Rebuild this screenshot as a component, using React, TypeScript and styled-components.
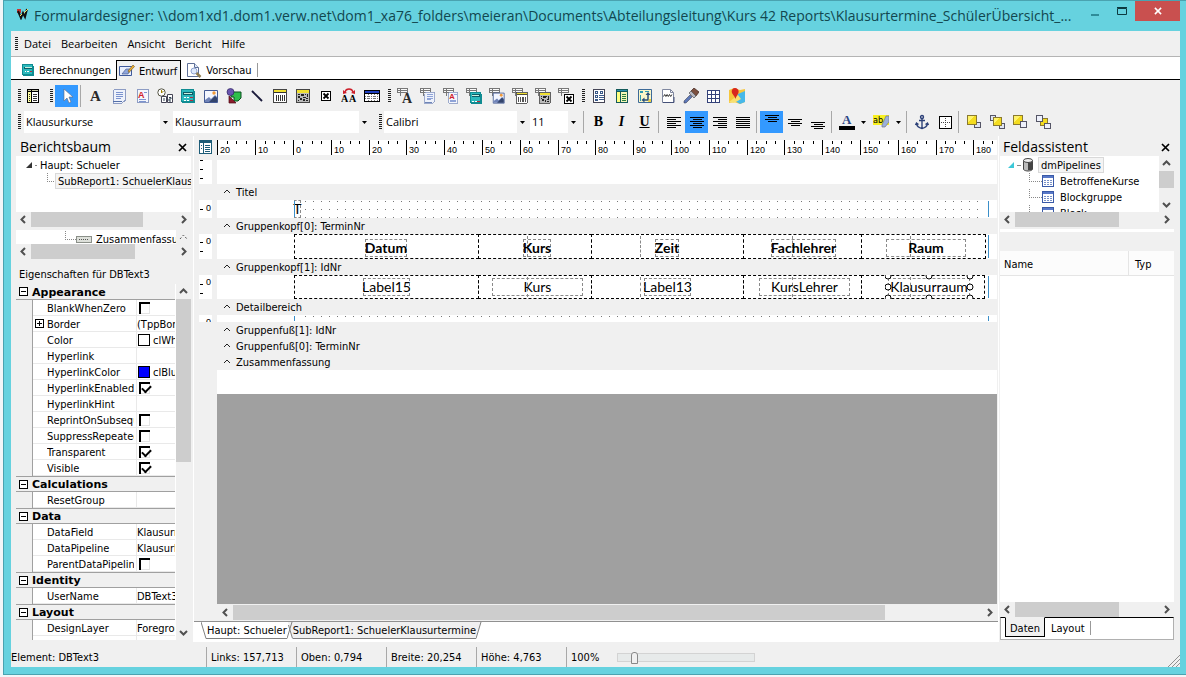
import React from "react";
import styled, { createGlobalStyle, css } from "styled-components";

const UI = '"DejaVu Sans Condensed", "DejaVu Sans", sans-serif';
const SEGOE = '"Open Sans", "Noto Sans", sans-serif';
const FACE = "#f0f0f0";
const CYAN = "#66d2df";

const GlobalStyle = createGlobalStyle`
  * { box-sizing: border-box; }
  body { margin: 0; background: #f2f6f8; font: 11px/16px ${UI}; color: #000; overflow: hidden; }
  button, select, input { font: inherit; color: inherit; margin: 0; padding: 0; border: 0; background: none; border-radius: 0; }
  ul { list-style: none; margin: 0; padding: 0; }
  svg { display: block; flex: none; }
`;

/* ---------- window ---------- */
const Desktop = styled.div`
  height: 100vh;
  display: flex;
  padding: 0 0 2px 3px;
`;
const Window = styled.div`
  flex: 1;
  min-width: 0;
  display: flex;
  flex-direction: column;
  background: ${CYAN};
  border: 1px solid #4aa3b0;
  border-right-width: 0;
  padding: 0 6px 7px 7px;
`;
const TitleBar = styled.header`
  height: 30px;
  flex: none;
  display: flex;
  align-items: flex-start;
`;
const TitleIcon = styled.div`
  padding: 7px 6px 0 5px;
`;
const Title = styled.h1`
  flex: 1;
  min-width: 0;
  margin: 0;
  font: 14px/30px ${SEGOE};
  color: #12474f;
  white-space: nowrap;
  overflow: hidden;
`;
const CaptionButton = styled.button<{ $close?: boolean }>`
  width: ${(p) => (p.$close ? 45 : 27)}px;
  height: 20px;
  display: grid;
  place-items: center;
  background: ${(p) => (p.$close ? "#c9504f" : "transparent")};
`;
const Client = styled.div`
  flex: 1;
  min-height: 0;
  display: flex;
  flex-direction: column;
  background: ${FACE};
`;
const Grip = styled.span<{ $h?: number }>`
  width: 3px;
  height: ${(p) => p.$h ?? 14}px;
  flex: none;
  background: repeating-linear-gradient(#222 0 1px, transparent 1px 2px);
`;
const Text = styled.span`
  padding-top: 2px;
`;
const MenuBar = styled.nav`
  height: 26px;
  flex: none;
  display: flex;
  align-items: center;
  padding-left: 4px;
  border-bottom: 1px solid #b4b4b4;
`;
const MenuItem = styled.button`
  margin-left: 10px;
  font: 11px/16px ${SEGOE};
  & + & { margin-left: 10px; }
  ${Grip} + & { margin-left: 6px; }
`;
const TabRow = styled.div`
  height: 23px;
  flex: none;
  display: flex;
  align-items: flex-end;
  padding-left: 5px;
  background: #fff;
  box-shadow: inset 0 -1px #000;
`;
const ViewTab = styled.button<{ $active?: boolean }>`
  height: 20px;
  display: flex;
  align-items: center;
  gap: 4px;
  padding: 0 5px;
  ${(p) =>
    p.$active &&
    css`
      background: ${FACE};
      border: 1px solid #000;
      border-bottom: 0;
      padding: 0 3px 0 2px;
    `}
`;
const TabEnd = styled.span`
  width: 1px;
  height: 14px;
  margin-bottom: 3px;
  background: #999;
`;

/* ---------- toolbars ---------- */
const Toolbar = styled.div<{ $format?: boolean }>`
  height: ${(p) => (p.$format ? 26 : 30)}px;
  flex: none;
  display: flex;
  align-items: center;
  padding: ${(p) => (p.$format ? "0 0 2px" : "2px 0 0")} 7px;
  padding-left: 7px;
`;
const GripSlot = styled.span<{ $w: number }>`
  width: ${(p) => p.$w}px;
  flex: none;
  display: flex;
  justify-content: flex-end;
  padding-right: 2px;
`;
const ToolButton = styled.button<{ $active?: boolean; $w?: number }>`
  width: ${(p) => p.$w ?? 23}px;
  height: 22px;
  flex: none;
  display: grid;
  place-items: center;
  background: ${(p) => (p.$active ? "#3399ff" : "transparent")};
`;
const Letter = styled.span<{ $italic?: boolean; $under?: boolean }>`
  font: bold 14px/16px "Liberation Serif", serif;
  font-style: ${(p) => (p.$italic ? "italic" : "normal")};
  text-decoration: ${(p) => (p.$under ? "underline" : "none")};
`;
const Sep = styled.span`
  width: 1px;
  height: 22px;
  flex: none;
  margin: 0 3px 0 2px;
  background: #a8a8a8;
`;
const ComboBox = styled.label<{ $w: number }>`
  position: relative;
  width: ${(p) => p.$w}px;
  height: 22px;
  flex: none;
  margin-right: 1px;
  background: linear-gradient(90deg, #fff calc(100% - 12px), ${FACE} 0);
`;
const ComboSelect = styled.select`
  appearance: none;
  width: 100%;
  height: 22px;
  padding-left: 2px;
  font: 11px/20px ${SEGOE};
  outline: 0;
`;
const ComboArrow = styled.svg`
  position: absolute;
  right: 4px;
  top: 10px;
  pointer-events: none;
`;

/* ---------- body ---------- */
const Body = styled.div`
  flex: 1;
  min-height: 0;
  display: flex;
`;
const LeftPanel = styled.aside`
  width: 183px;
  flex: none;
  display: flex;
  flex-direction: column;
  padding: 2px 2px 2px 5px;
  border-right: 1px solid #fff;
`;
const RightPanel = styled.aside`
  width: 182px;
  flex: none;
  display: flex;
  flex-direction: column;
  padding: 2px 6px 2px 1px;
  border-left: 1px solid #fff;
`;
const PanelTitle = styled.h2`
  height: 18px;
  flex: none;
  display: flex;
  justify-content: space-between;
  align-items: center;
  margin: 0;
  padding: 0 4px 0 3px;
  font: 14px/18px ${SEGOE};
  ${LeftPanel} & { padding-left: 4px; }
`;
const IconButton = styled.button`
  display: grid;
  place-items: center;
`;
const TreeBox = styled.div<{ $h: number }>`
  height: ${(p) => p.$h}px;
  flex: none;
  display: flex;
  background: #fff;
  overflow: hidden;
`;
const Tree = styled.ul`
  flex: 1;
  min-width: 0;
  overflow: hidden;
  padding-top: 1px;
`;
const TreeItem = styled.li<{ $indent: number }>`
  height: 16px;
  display: flex;
  align-items: center;
  padding-left: ${(p) => p.$indent}px;
  white-space: nowrap;
`;
const NodeLabel = styled.span<{ $selected?: boolean; $gap?: number }>`
  padding: 2px 2px 0;
  margin-left: ${(p) => p.$gap ?? 1}px;
  ${(p) =>
    p.$selected &&
    css`
      line-height: 12px;
      border: 1px solid #d9d9d9;
      background: #f4f4f4;
    `}
`;
const Branch = styled.span<{ $w: number; $h?: number }>`
  width: ${(p) => p.$w}px;
  height: ${(p) => p.$h ?? 9}px;
  align-self: flex-start;
  flex: none;
  border-bottom: 1px dotted #888;
  border-left: 1px dotted #888;
`;
const SplitGap = styled.div<{ $h: number }>`
  height: ${(p) => p.$h}px;
  flex: none;
`;

const Bar = styled.div<{ $vertical?: boolean }>`
  display: flex;
  flex: none;
  flex-direction: ${(p) => (p.$vertical ? "column" : "row")};
  ${(p) => (p.$vertical ? "width: 15px;" : "height: 15px;")}
  background: ${FACE};
`;
const BarButton = styled.button`
  width: 15px;
  height: 15px;
  flex: none;
  display: grid;
  place-items: center;
`;
const BarTrack = styled.div<{ $vertical?: boolean }>`
  flex: 1;
  min-width: 0;
  min-height: 0;
  display: flex;
  flex-direction: ${(p) => (p.$vertical ? "column" : "row")};
`;
const BarThumb = styled.div`
  background: #cdcdcd;
  flex: none;
`;

const CHEVRON: Record<string, string> = {
  left: "M6 1 2.500 4.500 6 8",
  right: "M3 1 6.500 4.500 3 8",
  up: "M1 6 4.500 2.500 8 6",
  down: "M1 3 4.500 6.500 8 3",
};
const Chevron = ({ dir }: { dir: string }) => (
  <svg width="9" height="9" fill="none" stroke="#505050" strokeWidth="2">
    <path d={CHEVRON[dir]} />
  </svg>
);
const ScrollBar = ({ vertical, size }: { vertical?: boolean; size: number }) => (
  <Bar $vertical={vertical}>
    <BarButton aria-label="back"><Chevron dir={vertical ? "up" : "left"} /></BarButton>
    <BarTrack $vertical={vertical}>
      <BarThumb style={vertical ? { height: `${size}%` } : { width: `${size}%` }} />
    </BarTrack>
    <BarButton aria-label="forward"><Chevron dir={vertical ? "down" : "right"} /></BarButton>
  </Bar>
);
const CloseMark = ({ color = "#000", size = 9 }: { color?: string; size?: number }) => (
  <svg width={size} height={size} viewBox="0 0 9 9" fill="none" stroke={color} strokeWidth="1.7">
    <path d="M1 1 8 8M8 1 1 8" />
  </svg>
);

/* ---------- property inspector ---------- */
const PropCaption = styled.div`
  height: 25px;
  flex: none;
  padding: 8px 0 0 3px;
  line-height: 16px;
`;
const PropArea = styled.div`
  flex: 1;
  min-height: 0;
  display: flex;
  overflow: hidden;
`;
const PropClip = styled.div`
  flex: 1;
  min-width: 0;
  overflow: hidden;
  border-right: 1px solid #fff;
`;
const PropTable = styled.table`
  width: 100%;
  table-layout: fixed;
  border-collapse: separate;
  border-spacing: 0;
`;
const GroupCell = styled.th`
  height: 16px;
  padding: 0 0 0 3px;
  text-align: left;
  border-bottom: 1px solid #a0a0a0;
  tr:not(:first-child) > & { border-top: 1px solid #a0a0a0; }
`;
const GroupInner = styled.span`
  height: 14px;
  display: flex;
  align-items: center;
  gap: 4px;
  font: bold 11px/14px "DejaVu Sans", sans-serif;
`;
const Gutter = styled.td`
  width: 17px;
  padding: 0;
  border-right: 1px solid #a0a0a0;
`;
const NameCell = styled.td<{ $expand?: boolean }>`
  width: 104px;
  height: 16px;
  padding: 0 2px 0 ${(p) => (p.$expand ? 2 : 14)}px;
  background: #fff;
  white-space: nowrap;
  overflow: hidden;
  border-bottom: 1px solid #e9e9e9;
  border-right: 1px solid #e9e9e9;
`;
const ValueCell = styled.td`
  height: 16px;
  padding: 0;
  background: #fff;
  white-space: nowrap;
  overflow: hidden;
  border-bottom: 1px solid #e9e9e9;
`;
const CellLine = styled.span`
  height: 15px;
  display: flex;
  align-items: center;
  gap: 3px;
  overflow: hidden;
  line-height: 15px;
`;
const Swatch = styled.span<{ $color: string }>`
  width: 12px;
  height: 12px;
  flex: none;
  margin-left: 1px;
  border: 1px solid #000;
  background: ${(p) => p.$color};
`;
const Tick = styled.input`
  appearance: none;
  display: block;
  width: 11px;
  height: 12px;
  margin-left: 2px;
  border: solid #000;
  border-width: 2px 0 0 2px;
  box-shadow: inset -1px -1px #e4e4e4;
  &:checked::before {
    content: "";
    display: block;
    width: 7px;
    height: 4px;
    margin: 1px 0 0 1px;
    border: solid #000;
    border-width: 0 0 2px 2px;
    transform: rotate(-45deg);
  }
`;
const Expander = ({ plus }: { plus?: boolean }) => (
  <svg width="9" height="9" shapeRendering="crispEdges" fill="#fff" stroke="#000">
    <path d="M.5.500h8v8h-8zM2 4.500h5" />
    {plus && <path d="M4.500 2v5" />}
  </svg>
);

type Prop = { name: string; text?: string; check?: boolean; color?: string; plus?: boolean };
const GROUPS: { title: string; props: Prop[] }[] = [
  {
    title: "Appearance",
    props: [
      { name: "BlankWhenZero", check: false },
      { name: "Border", text: "(TppBorder)", plus: true },
      { name: "Color", color: "#ffffff", text: "clWhite" },
      { name: "Hyperlink" },
      { name: "HyperlinkColor", color: "#0000ff", text: "clBlue" },
      { name: "HyperlinkEnabled", check: true },
      { name: "HyperlinkHint" },
      { name: "ReprintOnSubsequent", check: false },
      { name: "SuppressRepeatedValues", check: false },
      { name: "Transparent", check: true },
      { name: "Visible", check: true },
    ],
  },
  { title: "Calculations", props: [{ name: "ResetGroup" }] },
  {
    title: "Data",
    props: [
      { name: "DataField", text: "Klausurraum" },
      { name: "DataPipeline", text: "Klausurkurse" },
      { name: "ParentDataPipeline", check: false },
    ],
  },
  { title: "Identity", props: [{ name: "UserName", text: "DBText3" }] },
  { title: "Layout", props: [{ name: "DesignLayer", text: "Foreground" }, { name: "Height", text: "4,763" }] },
];

/* ---------- design surface ---------- */
const Center = styled.main`
  flex: 1;
  min-width: 0;
  display: flex;
  flex-direction: column;
`;
const Surface = styled.div`
  flex: 1;
  min-height: 0;
  display: flex;
  flex-direction: column;
  padding: 4px 0 0 5px;
`;
const Strip = styled.div<{ $h: number }>`
  height: ${(p) => p.$h}px;
  flex: none;
  display: flex;
  gap: 5px;
  overflow: hidden;
`;
const SideRuler = styled.div<{ $blank?: boolean }>`
  width: 13px;
  flex: none;
  background: ${(p) => (p.$blank ? FACE : "#fff")};
`;
const Paper = styled.div<{ $h?: number }>`
  position: relative;
  flex: 1;
  min-width: 0;
  ${(p) => p.$h && `height: ${p.$h}px;`}
  margin-right: 1px;
  background: #fff;
  overflow: hidden;
`;
const BandLabel = styled.div`
  height: 16px;
  flex: none;
  display: flex;
  align-items: center;
  gap: 5px;
  padding-left: 24px;
  white-space: nowrap;
`;
const Dots = styled.div`
  position: absolute;
  left: 81px;
  right: 12px;
  top: 0;
  bottom: 0;
  background: linear-gradient(90deg, #fff 7px, transparent 7px), linear-gradient(#fff 1px, #777 1px 2px, #fff 2px);
  background-size: 8px 8px;
`;
const Margin = styled.div<{ $x: number }>`
  position: absolute;
  left: ${(p) => p.$x}px;
  top: 1px;
  bottom: 1px;
  width: 1px;
  background: #3b8fc9;
`;
const Guide = styled.div<{ $x: number }>`
  position: absolute;
  left: ${(p) => p.$x}px;
  top: 2px;
  bottom: 2px;
  border-left: 1px dashed #888;
`;
const Box = styled.div<{ $x: number; $w: number }>`
  position: absolute;
  left: ${(p) => p.$x}px;
  top: 0;
  width: ${(p) => p.$w}px;
  bottom: 0;
  border: 1px dashed #000;
`;
const Field = styled.div<{ $x: number; $w: number; $y: number; $bold?: boolean }>`
  position: absolute;
  left: ${(p) => p.$x}px;
  top: ${(p) => p.$y}px;
  width: ${(p) => p.$w}px;
  height: 18px;
  display: flex;
  justify-content: center;
  border: 1px dashed #8a8a8a;
  font: ${(p) => (p.$bold ? "bold" : "normal")} 14px/16px Lato, sans-serif;
  white-space: nowrap;
`;
const Handles = styled.svg`
  position: absolute;
  left: 668px;
  top: 0;
`;
const Void = styled.div`
  flex: 1;
  min-height: 0;
  margin: 0 1px 0 18px;
  background: #a0a0a0;
`;
const ScrollWrap = styled.div`
  margin: 1px 1px 1px 19px;
`;
const PageTabs = styled.div`
  height: 21px;
  flex: none;
  display: flex;
  align-items: flex-start;
  padding-left: 7px;
  background: #fff;
  border-top: 1px solid #909090;
`;
const PageTab = styled.button<{ $active?: boolean }>`
  height: 17px;
  padding-top: 2px;
  background: ${(p) => (p.$active ? FACE : "#fff")};
  border-bottom: 1px solid #808080;
  line-height: 14px;
  white-space: nowrap;
`;
const Slant = ({ kind }: { kind: "first" | "mid" | "last" }) => (
  <svg width="6" height="17" fill="none" stroke="#808080">
    {kind === "first" && <path d="M0 0 5 16.500H6" />}
    {kind === "mid" && (
      <>
        <path d="M1 0H6V16H5z" fill={FACE} stroke="none" />
        <path d="M0 16.500 5 0M1.500 3 5.500 16.500" />
      </>
    )}
    {kind === "last" && (
      <>
        <path d="M0 0H5L0 16z" fill={FACE} stroke="none" />
        <path d="M0 16.500 5 0" />
      </>
    )}
  </svg>
);

/* ---------- right panel ---------- */
const WhiteGap = styled.div`
  height: 3px;
  flex: none;
  margin: 2px 0 0;
  background: #fff;
`;
const ListHead = styled.table`
  width: 100%;
  table-layout: fixed;
  border-spacing: 0;
  background: #fff;
  th {
    height: 25px;
    padding: 4px 5px 0 4px;
    text-align: left;
    font-weight: normal;
    border-bottom: 1px solid #e5e5e5;
    background: #fcfcfc;
  }
  th + th { width: 46px; border-left: 1px solid #e5e5e5; padding-left: 6px; }
`;
const ListBody = styled.div`
  flex: 1;
  background: #fff;
`;
const DockTabs = styled.div`
  height: 23px;
  flex: none;
  display: flex;
  align-items: flex-start;
  padding-left: 4px;
  background: #fff;
  border: 1px solid #b0b0b0;
  border-top: 1px solid #000;
`;
const DockTab = styled.button<{ $active?: boolean }>`
  height: 20px;
  padding: 2px 5px 0 6px;
  ${(p) =>
    p.$active &&
    css`
      margin-top: -1px;
      padding: 3px 4px 0;
      background: ${FACE};
      border: 1px solid #000;
      border-top-color: ${FACE};
    `}
`;
const DockEnd = styled.span`
  width: 1px;
  height: 14px;
  margin-top: 3px;
  background: #999;
`;

/* ---------- status bar ---------- */
const StatusBar = styled.footer`
  height: 25px;
  flex: none;
  display: flex;
  padding-top: 5px;
`;
const StatusCell = styled.div<{ $w: number }>`
  width: ${(p) => p.$w}px;
  height: 20px;
  flex: none;
  line-height: 22px;
  white-space: nowrap;
  & + & { border-left: 1px solid #a8a8a8; padding-left: 4px; }
`;
const Zoom = styled.input`
  appearance: none;
  width: 138px;
  height: 9px;
  margin-top: 6px;
  background: #e7eaea;
  border: 1px solid #d3d3d3;
  &::-webkit-slider-thumb {
    appearance: none;
    width: 7px;
    height: 12px;
    background: #f0f0f0;
    border: 1px solid #888;
    border-radius: 3px 3px 0 0;
  }
`;
const SizeGrip = styled.svg`
  margin: auto 0 0 auto;
`;

/* ---------- icons ---------- */
const Px = ({ children, size = 16 }: { children: React.ReactNode; size?: number }) => (
  <svg width={size} height={size} viewBox="0 0 16 16" shapeRendering="crispEdges">{children}</svg>
);
const glyphs: Record<string, React.ReactNode> = {
  list: (
    <>
      <path d="M2 1h12v14H2z" fill="#000" />
      <path d="M3 4h3v10H3z" fill="#ffffa0" />
      <path d="M7 4h6v10H7z" fill="#fff" />
      <path d="M3 2h3v1H3zM7 2h6v1H7z" fill="#c8c8a0" />
      <path d="M8 6h4M8 8h4M8 10h4M8 12h4M4 6h1M4 8h1M4 10h1M4 12h1" stroke="#333" transform="translate(0 .5)" />
    </>
  ),
  pointer: (
    <path d="M5 1v12l3-3 2 5 2-1-2-5h4z" fill="#fff" stroke="#667" strokeWidth=".6" shapeRendering="auto" />
  ),
  memo: (
    <>
      <path d="M4 1.500h10v11l-3 2.500H2V3z" fill="#eef2fb" stroke="#8d9cc4" />
      <path d="M5 4.500h7M5 6.500h7M5 8.500h7M5 10.500h5" stroke="#7b93cf" />
      <path d="M2 13.500h9" stroke="#5570a8" />
    </>
  ),
  rich: (
    <>
      <path d="M4 1.500h10v13H3V3z" fill="#f4f6fc" stroke="#8d9cc4" />
      <path d="M5 11.500h7M5 13h7M10 4h3" stroke="#7b93cf" />
      <text x="4" y="10" fontFamily="Liberation Sans" fontWeight="bold" fontSize="9" fill="#d0202a">A</text>
    </>
  ),
  sysvar: (
    <g shapeRendering="auto">
      <circle cx="4.500" cy="4.500" r="3.700" fill="#fff" stroke="#554" />
      <path d="M4.500 2v3l2-2" stroke="#a08000" fill="none" />
      <path d="M4.500 8.500h5v6h-5zM10.500 6.500h5v8h-5z" fill="#fff" stroke="#445" />
      <path d="M7 10v3M12 9.500h2v1.500h-2v2h2" stroke="#345" fill="none" />
    </g>
  ),
  calc: (
    <>
      <path d="M1 1h13v2h1v12H2v-1H1z" fill="#108c92" />
      <path d="M2 2h11v11H2z" fill="#2cb9bd" />
      <path d="M3 4h10v3H3z" fill="#0c5c66" />
      <path d="M4 5h8v1H4z" fill="#c8f0e0" />
      <path d="M4 9h2v1H4zM7 9h2v1H7zM4 12h2v1H4zM7 12h2v1H7z" fill="#fff" />
      <path d="M10 9h3v1h-3zM10 12h3v1h-3z" fill="#b03040" />
    </>
  ),
  image: (
    <g shapeRendering="auto">
      <path d="M1.500 2.500h13v12h-13z" fill="#f3f6ff" stroke="#445a94" />
      <path d="M2 14V12L6 9l2 2 4-4 2 2v5z" fill="#6f83b8" />
      <path d="M6 14 12 8l2 2v4z" fill="#33446c" />
      <circle cx="11" cy="5" r="1.700" fill="#f09a3a" />
    </g>
  ),
  shape: (
    <g shapeRendering="auto">
      <path d="M5 4h10v6l-3 3H8V9H5z" fill="#2fbe4a" stroke="#0b4f20" />
      <circle cx="4.500" cy="4" r="3.500" fill="#6a55b0" stroke="#2e2460" strokeWidth=".7" />
      <path d="M3 8v7h7z" fill="#8c1c2c" stroke="#4a0a14" strokeWidth=".7" />
    </g>
  ),
  line: <path d="M3 3 13 13" stroke="#1a1a3a" strokeWidth="1.900" shapeRendering="auto" />,
  barcode: (
    <>
      <path d="M1.500 1.500h13v13h-13z" fill="#fff" stroke="#444" />
      <path d="M2 2h12v3H2z" fill="#f0e030" />
      <path d="M2 4.500h12M4.500 7v6M6.500 7v6M8.500 7v6M10.500 7v6M12.500 7v6" stroke="#333" />
    </>
  ),
  barcode2d: (
    <>
      <path d="M1.500 1.500h13v13h-13z" fill="#fff" stroke="#444" />
      <path d="M2 2h12v3H2z" fill="#f0e030" />
      <path d="M2 5h12v9H2z" fill="#bbb" />
      <path d="M3 6h2v1H3zM6 6h3v2H6zM10 6h1v1h-1zM12 6h1v3h-1zM3 8h2v2H3zM8 9h3v1H8zM5 10h2v2H5zM3 12h1v1H3zM8 11h2v2H8zM11 10h2v1h-2zM11 12h2v1h-2z" fill="#222" />
    </>
  ),
  check: (
    <>
      <path d="M3.500 3.500h9v9h-9z" fill="#fff" stroke="#000" />
      <path d="M5.500 5.500 10.500 10.500M10.500 5.500 5.500 10.500" stroke="#000" strokeWidth="1.800" shapeRendering="auto" />
    </>
  ),
  rotate: (
    <g shapeRendering="auto">
      <path d="M4 4C5 0 11 0 12 4" fill="none" stroke="#cc1f2a" strokeWidth="1.300" />
      <path d="M2 2v4l4-1zM14 2v4l-4-1z" fill="#cc1f2a" />
      <text x="0" y="14" fontFamily="Liberation Serif" fontWeight="bold" fontSize="10">A</text>
      <text x="8" y="14" fontFamily="Liberation Serif" fontWeight="bold" fontSize="10">A</text>
    </g>
  ),
  table: (
    <>
      <path d="M0 2h16v12H0z" fill="#000" />
      <path d="M1 3h14v2H1z" fill="#2040c0" />
      <path d="M1 6h14v7H1z" fill="#fff" />
      <path d="M1 8.500h14M1 10.500h14M4.500 6v7M7.500 6v7M10.500 6v7M13 6v7" stroke="#777" strokeDasharray="1 1" />
    </>
  ),
  letterA: <text x="2" y="13" fontFamily="Liberation Serif" fontWeight="bold" fontSize="15" fill="#2a2a2a">A</text>,
  tree: (
    <>
      <path d="M2.500 1.500h11v13h-11z" fill="#fff" stroke="#445" />
      <path d="M4.500 3.500h2v2h-2zM4.500 7.500h2v2h-2zM4.500 11.500h2v1h-2zM9.500 3.500h2v2h-2z" fill="#fff" stroke="#3a5a8a" />
      <path d="M8 7.500h5M8 9.500h5M8 11.500h5" stroke="#3a5a8a" />
    </>
  ),
  data: (
    <>
      <path d="M2 1h12v14H2z" fill="#145a5a" />
      <path d="M3 4h3v10H3z" fill="#ffff80" />
      <path d="M7 4h6v10H7z" fill="#f6f6b8" />
      <path d="M3 2h10v1H3z" fill="#2c90b0" />
      <path d="M8 6.500h4M8 8.500h4M8 10.500h4M8 12.500h4" stroke="#2c8040" />
    </>
  ),
  layout: (
    <g shapeRendering="auto">
      <path d="M1.500 1.500h13v13h-13z" fill="#fbf7c8" stroke="#3d6a98" />
      <path d="M3 3h3v2H3zM3 7h1v6H3zM8 3h4v1H8z" fill="#2f9ab0" />
      <path d="M6 12h5V6" fill="none" stroke="#2a4f7a" strokeWidth="1.500" />
      <path d="M8.500 7l2.500-3 2.500 3zM7.500 9.500v5L4.500 12z" fill="#2a4f7a" />
      <path d="M12 11h2v3h-3z" fill="#f0d040" />
    </g>
  ),
  break: (
    <g shapeRendering="auto">
      <path d="M2.500 14.500v-13h8l3 3v10z" fill="#fff" stroke="#8088a0" />
      <path d="M10.500 1.500v3h3" fill="none" stroke="#8088a0" />
      <path d="M3.500 8.500l1.200-2 1.200 2 1.200-2 1.200 2 1.200-2 1.200 2 1.200-2" fill="none" stroke="#333" />
      <path d="M3 14.500h11V9" fill="none" stroke="#445078" />
    </g>
  ),
  brush: (
    <g shapeRendering="auto">
      <path d="M8 3 11 0l5 4-3 4z" fill="#7b5040" stroke="#3c2018" strokeWidth=".7" />
      <path d="M6 5 8 3l5 5-2 2z" fill="#b9b9c4" stroke="#555" strokeWidth=".7" />
      <path d="M7 7 9 9 3 15H1v-2z" fill="#5d78b8" stroke="#334" strokeWidth=".5" />
    </g>
  ),
  grid: <path d="M1.500 2.500h12v12h-12zM1.500 6.500h12M1.500 10.500h12M5.500 2.500v12M9.500 2.500v12" fill="#fff" stroke="#34427a" />,
  map: (
    <g shapeRendering="auto">
      <path d="M0 2 5 0l6 2 5-1v13l-5 2-6-2-5 1z" fill="#f6c63c" />
      <path d="M9 6l7-3v11l-5 2-5-3z" fill="#46b8ea" />
      <path d="M0 14 9 7l3 4-7 4z" fill="#f8e070" />
      <path d="M6 0a3.600 3.600 0 0 1 3.600 4C9.600 6 7 8 6.500 11 6 8 2.800 6 2.800 4A3.300 3.300 0 0 1 6 0z" fill="#d8271e" />
    </g>
  ),
  design: (
    <g shapeRendering="auto">
      <path d="M.5 3.500h12v9H.5z" fill="#e8eefc" stroke="#3f5a9c" />
      <path d="M3 11 7 6h5l-3 5z" fill="#8fa6dc" stroke="#4a5f94" strokeWidth=".7" />
      <path d="M9 8 14 2l1.500 1.500L10 9.500z" fill="#f0b030" stroke="#665020" strokeWidth=".6" />
    </g>
  ),
  preview: (
    <g shapeRendering="auto">
      <path d="M1.500 1.500h7l4 4v9h-11z" fill="#fff" stroke="#5f7098" />
      <path d="M8.500 1.500v4h4" fill="#dfe9fb" stroke="#5f7098" />
      <circle cx="8" cy="9" r="3" fill="#dfe9fb" stroke="#8fa3d0" />
      <path d="M10.500 11 14.500 15" stroke="#8f7c50" strokeWidth="2.500" />
    </g>
  ),
  fontColor: (
    <>
      <text x="3" y="10" fontFamily="Liberation Serif" fontWeight="bold" fontSize="13" fill="#2b4684">A</text>
      <path d="M0 12h16v4H0z" />
    </>
  ),
  highlight: (
    <g shapeRendering="auto">
      <path d="M0 1h16v10H0z" fill="#f8f020" />
      <path d="M9 11 13 2h3v6l-4 5H9z" fill="#9ab0dc" stroke="#778" strokeWidth=".7" />
      <text x="0" y="9" fontFamily="DejaVu Sans Condensed" fontSize="9">ab</text>
    </g>
  ),
  anchor: (
    <g shapeRendering="auto" fill="none" stroke="#2c4078" strokeWidth="1.400">
      <circle cx="8" cy="3" r="1.500" />
      <path d="M8 5v9M5 6.500h6M2.500 9.500C3 13 5.500 14 8 14.500 10.500 14 13 13 13.500 9.500M1.500 11l1-2 2 1.500M14.500 11l-1-2-2 1.500" />
    </g>
  ),
  border: (
    <>
      <path d="M2.500 2.500h12v12h-12z" fill="#fff" stroke="#000" />
      <path d="M8.500 4v9M4 8.500h9" stroke="#444" strokeDasharray="1 1" />
    </>
  ),
  front: (
    <>
      <path d="M8.500 8.500h6v5h-6z" fill="#dfe5f6" stroke="#556" />
      <path d="M1.500 1.500h9v9h-9z" fill="#f4dc20" stroke="#8a7a30" />
      <path d="M2 2h6L2 8z" fill="#fff36a" />
    </>
  ),
  forward: (
    <>
      <path d="M1.500 1.500h5v5h-5zM10.500 9.500h5v5h-5z" fill="#dfe5f6" stroke="#556" />
      <path d="M4.500 3.500h8v8h-8z" fill="#f4dc20" stroke="#8a7a30" />
      <path d="M5 4h5L5 9z" fill="#fff36a" />
    </>
  ),
  back: (
    <>
      <path d="M1.500 1.500h9v9h-9z" fill="#f4dc20" stroke="#8a7a30" />
      <path d="M2 2h6L2 8z" fill="#fff36a" />
      <path d="M8.500 7.500h6v6h-6z" fill="#eef1fb" stroke="#556" />
    </>
  ),
  backward: (
    <>
      <path d="M5.500 4.500h7v7h-7z" fill="#f4dc20" stroke="#8a7a30" />
      <path d="M1.500 1.500h6v6h-6zM9.500 9.500h6v5h-6z" fill="#eef1fb" stroke="#556" />
    </>
  ),
};
const Icon = ({ name, size }: { name: string; size?: number }) => <Px size={size}>{glyphs[name]}</Px>;
const DbIcon = ({ name }: { name: string }) => (
  <Px>
    <path d="M.5.500h10v4H.5zM.5 2.500h10M3.500.500v7" fill="#fafafa" stroke="#777" />
    {name === "letterA" ? (
      <text x="5" y="15" fontFamily="Liberation Serif" fontWeight="bold" fontSize="14" fill="#2a2a2a">A</text>
    ) : (
      <g transform={name === "check" ? "translate(3 3)" : "translate(3 3) scale(.84)"}>{glyphs[name]}</g>
    )}
  </Px>
);

const alignPath = (kind: string) => {
  const widths = [14, 9, 14, 9, 14, 9];
  const x: Record<string, (w: number) => number> = {
    left: () => 1,
    center: (w) => Math.round(8 - w / 2),
    right: (w) => 15 - w,
    justify: () => 1,
  };
  return widths
    .map((w, i) => {
      const len = kind === "justify" ? 14 : w;
      return `M${x[kind](len)} ${3 + i * 2}.500h${len}`;
    })
    .join("");
};
const Align = ({ kind }: { kind: string }) => (
  <Px><path d={alignPath(kind)} stroke="#000" /></Px>
);
const VAlign = ({ y }: { y: number }) => (
  <Px><path d={`M1 ${y}.500h14M4 ${y + 2}.500h9M1 ${y + 4}.500h14M4 ${y + 6}.500h9`} stroke="#000" /></Px>
);
const DropMark = () => <svg width="5" height="3"><path d="M0 0h5L2.500 3z" /></svg>;

const Combo = ({ value, label, width }: { value: string; label: string; width: number }) => (
  <ComboBox $w={width}>
    <ComboSelect aria-label={label} defaultValue={value}><option>{value}</option></ComboSelect>
    <ComboArrow width="5" height="3"><path d="M0 0h5L2.500 3z" /></ComboArrow>
  </ComboBox>
);

/* ---------- rulers ---------- */
const ORIGIN = 76;
const MM = 3.78;
const TopRuler = () => {
  const marks: React.ReactNode[] = [];
  for (let i = -8; i <= 74; i++) {
    const x = Math.round(ORIGIN + i * 2.5 * MM);
    const major = i % 4 === 0;
    marks.push(<path key={i} d={`M${x}.500 ${major ? 0 : 1}v${major ? 15 : 3}`} stroke="#000" shapeRendering="crispEdges" />);
    if (major)
      marks.push(<text key={`t${i}`} x={x + 3} y="13" fontSize="9" fontFamily="Liberation Sans">{Math.abs(i * 2.5)}</text>);
  }
  return <svg width="100%" height="15">{marks}</svg>;
};
const SideMarks = ({ ticks, zero, h }: { ticks: number[]; zero?: number; h: number }) => (
  <svg width="13" height={h}>
    {ticks.map((t) => <path key={t} d={`M1 ${t}.500h3`} stroke="#000" shapeRendering="crispEdges" />)}
    {zero !== undefined && <text x="7" y={zero} fontSize="9" fontFamily="Liberation Sans">0</text>}
  </svg>
);
const Caret = () => (
  <svg width="8" height="8" fill="none" stroke="#222"><path d="M1 5 4 2 7 5" /></svg>
);
const Band = ({ label }: { label: string }) => (
  <BandLabel><Caret /><Text>{label}</Text></BandLabel>
);

const CELLS = [[77, 185], [261, 114], [374, 153], [526, 119]];
const GUIDES = [310, 423, 575, 693];

export default function App() {
  return (
    <Desktop>
      <GlobalStyle />
      <Window>
        <TitleBar>
          <TitleIcon>
            <svg width="12" height="12" viewBox="0 0 12 12">
              <path d="M1 1h4v4H1z" fill="#c33" />
              <path d="M2 3 5 10 7 5 9 9 11 1" fill="none" stroke="#111" strokeWidth="2" />
              <path d="M8 5 12 1M4 8 6 6" stroke="#f0e060" />
            </svg>
          </TitleIcon>
          <Title>Formulardesigner: \\dom1xd1.dom1.verw.net\dom1_xa76_folders\meieran\Documents\Abteilungsleitung\Kurs 42 Reports\Klausurtermine_SchülerÜbersicht_...</Title>
          <CaptionButton aria-label="Minimieren"><svg width="8" height="12"><path d="M0 9h8v2H0z" fill="#2f8c99" /></svg></CaptionButton>
          <CaptionButton aria-label="Maximieren"><svg width="10" height="8"><path d="M.5 1.500h9v6h-9zM0 .500h10" fill="none" stroke="#0d3a40" /></svg></CaptionButton>
          <CaptionButton $close aria-label="Schließen"><CloseMark color="#fff" size={8} /></CaptionButton>
        </TitleBar>
        <Client>
          <MenuBar>
            <Grip />
            {["Datei", "Bearbeiten", "Ansicht", "Bericht", "Hilfe"].map((m) => <MenuItem key={m}>{m}</MenuItem>)}
          </MenuBar>
          <TabRow>
            <ViewTab><Icon name="calc" size={14} /><Text>Berechnungen</Text></ViewTab>
            <ViewTab $active><Icon name="design" /><Text>Entwurf</Text></ViewTab>
            <ViewTab><Icon name="preview" /><Text>Vorschau</Text></ViewTab>
            <TabEnd />
          </TabRow>
          <Toolbar>
            <Grip />
            <ToolButton aria-label="Liste"><Icon name="list" /></ToolButton>
            <GripSlot $w={11}><Grip /></GripSlot>
            <ToolButton $active aria-label="Auswahl"><Icon name="pointer" /></ToolButton>
            <Sep />
            {["letterA", "memo", "rich", "sysvar", "calc", "image", "shape", "line", "barcode", "barcode2d", "check", "rotate", "table"].map((n) => (
              <ToolButton key={n} aria-label={n}><Icon name={n} /></ToolButton>
            ))}
            <GripSlot $w={10}><Grip /></GripSlot>
            {["letterA", "memo", "rich", "calc", "image", "barcode", "barcode2d", "check"].map((n) => (
              <ToolButton key={n} aria-label={`DB ${n}`}><DbIcon name={n} /></ToolButton>
            ))}
            <GripSlot $w={10}><Grip /></GripSlot>
            {["tree", "data", "layout", "break", "brush", "grid", "map"].map((n) => (
              <ToolButton key={n} aria-label={n}><Icon name={n} /></ToolButton>
            ))}
          </Toolbar>
          <Toolbar $format>
            <Grip $h={16} />
            <GripSlot $w={3} />
            <Combo value="Klausurkurse" label="Datenquelle" width={148} />
            <Combo value="Klausurraum" label="Feld" width={198} />
            <GripSlot $w={12}><Grip $h={16} /></GripSlot>
            <Combo value="Calibri" label="Schriftart" width={145} />
            <Combo value="11" label="Schriftgrad" width={50} />
            <Sep />
            <ToolButton><Letter>B</Letter></ToolButton>
            <ToolButton><Letter $italic>I</Letter></ToolButton>
            <ToolButton><Letter $under>U</Letter></ToolButton>
            <Sep />
            {["left", "center", "right", "justify"].map((k) => (
              <ToolButton key={k} $active={k === "center"} aria-label={k}><Align kind={k} /></ToolButton>
            ))}
            <Sep />
            <ToolButton $active aria-label="oben"><VAlign y={1} /></ToolButton>
            <ToolButton aria-label="mitte"><VAlign y={5} /></ToolButton>
            <ToolButton aria-label="unten"><VAlign y={8} /></ToolButton>
            <Sep />
            <ToolButton aria-label="Schriftfarbe"><Icon name="fontColor" /></ToolButton>
            <ToolButton $w={11} aria-label="mehr"><DropMark /></ToolButton>
            <ToolButton aria-label="Hervorheben"><Icon name="highlight" /></ToolButton>
            <ToolButton $w={12} aria-label="mehr"><DropMark /></ToolButton>
            <Sep />
            <ToolButton aria-label="Anker"><Icon name="anchor" /></ToolButton>
            <ToolButton aria-label="Rahmen"><Icon name="border" /></ToolButton>
            <Sep />
            {["front", "forward", "back", "backward"].map((n) => (
              <ToolButton key={n} aria-label={n}><Icon name={n} /></ToolButton>
            ))}
          </Toolbar>

          <Body>
            <LeftPanel>
              <PanelTitle>Berichtsbaum<IconButton aria-label="Schließen"><CloseMark /></IconButton></PanelTitle>
              <TreeBox $h={56}>
                <Tree>
                  <TreeItem $indent={10}>
                    <svg width="12" height="7"><path d="M6 0v6H0z" fill="#333" /><path d="M9 3.500h2" stroke="#888" /></svg>
                    <NodeLabel $gap={0}>Haupt: Schueler</NodeLabel>
                  </TreeItem>
                  <TreeItem $indent={31}>
                    <Branch $w={7} />
                    <NodeLabel $selected>SubReport1: SchuelerKlausurtermine</NodeLabel>
                  </TreeItem>
                </Tree>
              </TreeBox>
              <ScrollBar size={77} />
              <SplitGap $h={3} />
              <TreeBox $h={14}>
                <Tree>
                  <TreeItem $indent={49}>
                    <Branch $w={11} />
                    <svg width="16" height="7"><rect x=".5" y=".5" width="15" height="6" fill="#dde0da" stroke="#8a8f88" /><path d="M3 3.500h9" stroke="#555" strokeDasharray="1 1" /></svg>
                    <NodeLabel $gap={2}>Zusammenfassung</NodeLabel>
                  </TreeItem>
                </Tree>
                <Bar $vertical><BarButton aria-label="Position"><svg width="9" height="7" fill="none" stroke="#555" strokeDasharray="2 2"><path d="M1 5 4.500 1 8 5" /></svg></BarButton></Bar>
              </TreeBox>
              <ScrollBar size={72} />
              <PropCaption>Eigenschaften für DBText3</PropCaption>
              <PropArea>
                <PropClip>
                  <PropTable>
                    <colgroup><col style={{ width: 17 }} /><col style={{ width: 104 }} /><col /></colgroup>
                    <tbody>
                      {GROUPS.map((g) => (
                        <React.Fragment key={g.title}>
                          <tr><GroupCell colSpan={3}><GroupInner><Expander /><Text>{g.title}</Text></GroupInner></GroupCell></tr>
                          {g.props.map((p) => (
                            <tr key={p.name}>
                              <Gutter />
                              <NameCell $expand={p.plus}><CellLine>{p.plus && <Expander plus />}<Text>{p.name}</Text></CellLine></NameCell>
                              <ValueCell>
                                <CellLine>
                                  {p.check !== undefined && <Tick type="checkbox" aria-label={p.name} defaultChecked={p.check} />}
                                  {p.color && <Swatch $color={p.color} />}
                                  {p.text && <Text>{p.text}</Text>}
                                </CellLine>
                              </ValueCell>
                            </tr>
                          ))}
                        </React.Fragment>
                      ))}
                    </tbody>
                  </PropTable>
                </PropClip>
                <ScrollBar vertical size={50} />
              </PropArea>
            </LeftPanel>

            <Center>
              <Surface>
                <Strip $h={20}>
                  <svg width="13" height="14" shapeRendering="crispEdges"><path d="M.5.500h12v13H.5z" fill="#fff" stroke="#1d5c78" /><path d="M1 1h11v2H1zM4 3h1v10H4z" fill="#1d5c78" /><path d="M6 5.500h5M6 7.500h5M6 9.500h5M6 11.500h5M2 5.500h1M2 8.500h1" stroke="#1d5c78" /></svg>
                  <Paper $h={15}><TopRuler /></Paper>
                </Strip>
                <Strip $h={24}><SideRuler><SideMarks h={24} ticks={[0, 9, 18]} /></SideRuler><Paper /></Strip>
                <Band label="Titel" />
                <Strip $h={18}>
                  <SideRuler><SideMarks h={18} ticks={[9]} zero={11} /></SideRuler>
                  <Paper>
                    <Dots />
                    <Margin $x={771} />
                    <Field $x={77} $w={7} $y={0}>T</Field>
                    <Margin $x={77} />
                  </Paper>
                </Strip>
                <Band label="Gruppenkopf[0]: TerminNr" />
                <Strip $h={25}>
                  <SideRuler><SideMarks h={25} ticks={[8, 17]} zero={10} /></SideRuler>
                  <Paper>
                    {CELLS.map(([x, w]) => <Box key={x} $x={x} $w={w} />)}
                    <Box $x={644} $w={125} />
                    {GUIDES.map((x) => <Guide key={x} $x={x} />)}
                    <Field $bold $x={148} $w={42} $y={5}>Datum</Field>
                    <Field $bold $x={306} $w={28} $y={5}>Kurs</Field>
                    <Field $bold $x={438} $w={24} $y={5}>Zeit</Field>
                    <Field $bold $x={554} $w={65} $y={5}>Fachlehrer</Field>
                    <Field $bold $x={669} $w={80} $y={5}>Raum</Field>
                    <Margin $x={771} />
                  </Paper>
                </Strip>
                <Band label="Gruppenkopf[1]: IdNr" />
                <Strip $h={24}>
                  <SideRuler><SideMarks h={24} ticks={[9, 18]} zero={10} /></SideRuler>
                  <Paper>
                    {CELLS.map(([x, w]) => <Box key={x} $x={x} $w={w} />)}
                    <Box $x={644} $w={124} />
                    {GUIDES.map((x) => <Guide key={x} $x={x} />)}
                    <Field $x={146} $w={47} $y={3}>Label15</Field>
                    <Field $x={275} $w={91} $y={3}>Kurs</Field>
                    <Field $x={427} $w={47} $y={3}>Label13</Field>
                    <Field $x={542} $w={91} $y={3}>KursLehrer</Field>
                    <Field $x={671} $w={82} $y={3}>Klausurraum</Field>
                    <Handles width="90" height="24" fill="#fff" stroke="#000">
                      {[3, 44, 85].map((x) => (
                        <React.Fragment key={x}>
                          <circle cx={x} cy="1" r="3" />
                          {x !== 44 && <circle cx={x} cy="12" r="3" />}
                          <circle cx={x} cy="23" r="3" />
                        </React.Fragment>
                      ))}
                    </Handles>
                    <Margin $x={771} />
                  </Paper>
                </Strip>
                <Band label="Detailbereich" />
                <Strip $h={7}>
                  <SideRuler><SideMarks h={7} ticks={[]} zero={10} /></SideRuler>
                  <Paper><Dots /><Margin $x={77} /><Margin $x={771} /></Paper>
                </Strip>
                <Band label="Gruppenfuß[1]: IdNr" />
                <Band label="Gruppenfuß[0]: TerminNr" />
                <Band label="Zusammenfassung" />
                <Strip $h={24}><SideRuler $blank /><Paper /></Strip>
                <Void />
                <ScrollWrap><ScrollBar size={87} /></ScrollWrap>
              </Surface>
              <PageTabs>
                <Slant kind="first" />
                <PageTab>Haupt: Schueler</PageTab>
                <Slant kind="mid" />
                <PageTab $active>SubReport1: SchuelerKlausurtermine</PageTab>
                <Slant kind="last" />
              </PageTabs>
            </Center>

            <RightPanel>
              <PanelTitle>Feldassistent<IconButton aria-label="Schließen"><CloseMark /></IconButton></PanelTitle>
              <TreeBox $h={56}>
                <Tree>
                  <TreeItem $indent={8}>
                    <svg width="14" height="7"><path d="M6 0v6H0z" fill="#3cc8d8" /><path d="M9 3.500h4" stroke="#888" /></svg>
                    <svg width="12" height="14" stroke="#444"><path d="M1.500 2.500v9c2 2 7 2 9 0v-9z" fill="#bbb" /><path d="M6 4h4v8H6z" fill="#444" stroke="none" /><ellipse cx="6" cy="2.500" rx="4.500" ry="2" fill="#eee" /></svg>
                    <NodeLabel $selected $gap={4}>dmPipelines</NodeLabel>
                  </TreeItem>
                  {["BetroffeneKurse", "Blockgruppe", "Block"].map((n) => (
                    <TreeItem key={n} $indent={29}>
                      <Branch $w={13} $h={9} />
                      <svg width="12" height="12" shapeRendering="crispEdges"><path d="M.5.500h11v11H.5z" fill="#fff" stroke="#3a5aa8" /><path d="M1 1h10v2H1z" fill="#5878c8" /><path d="M2 5.500h8M2 7.500h8M2 9.500h8" stroke="#7890c8" strokeDasharray="2 1" /></svg>
                      <NodeLabel $gap={4}>{n}</NodeLabel>
                    </TreeItem>
                  ))}
                </Tree>
                <ScrollBar vertical size={65} />
              </TreeBox>
              <ScrollBar size={72} />
              <WhiteGap />
              <SplitGap $h={19} />
              <ListHead><thead><tr><th>Name</th><th>Typ</th></tr></thead></ListHead>
              <ListBody />
              <ScrollBar size={72} />
              <DockTabs>
                <DockTab $active>Daten</DockTab>
                <DockTab>Layout</DockTab>
                <DockEnd />
              </DockTabs>
            </RightPanel>
          </Body>

          <StatusBar>
            <StatusCell $w={195}>Element: DBText3</StatusCell>
            <StatusCell $w={90}>Links: 157,713</StatusCell>
            <StatusCell $w={90}>Oben: 0,794</StatusCell>
            <StatusCell $w={90}>Breite: 20,254</StatusCell>
            <StatusCell $w={90}>Höhe: 4,763</StatusCell>
            <StatusCell $w={51}>100%</StatusCell>
            <Zoom type="range" min={0} max={100} defaultValue={10} aria-label="Zoom" />
            <SizeGrip width="12" height="12" stroke="#909090"><path d="M0 12 12 0M4 12 12 4M8 12 12 8" /></SizeGrip>
          </StatusBar>
        </Client>
      </Window>
    </Desktop>
  );
}
